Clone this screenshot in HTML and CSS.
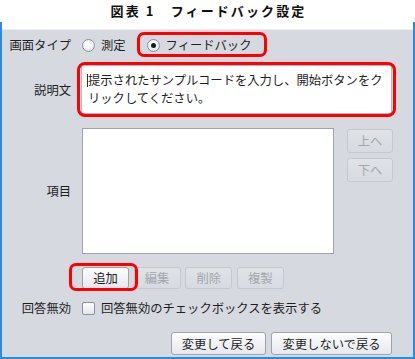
FILE: index.html
```html
<!DOCTYPE html>
<html lang="ja">
<head>
<meta charset="utf-8">
<title>フィードバック設定</title>
<link rel="stylesheet" href="styles.css">
</head>
<body>
<div class="caption">図表 1　フィードバック設定</div>
<div class="window">
  <div class="strip"></div>
  <div class="panel">
    <div class="row row-type">
      <div class="label">画面タイプ</div>
      <div class="control radios">
        <label class="opt"><span class="radio"></span><span>測定</span></label>
        <label class="opt opt-fb mark"><span class="radio checked"></span><span>フィードバック</span></label>
      </div>
    </div>
    <div class="row row-desc">
      <div class="label">説明文</div>
      <div class="control">
        <div class="textarea mark mark-text"><span class="caret"></span>提示されたサンプルコードを入力し、開始ボタンをク<br>リックしてください。</div>
      </div>
    </div>
    <div class="row row-items">
      <div class="label">項目</div>
      <div class="control items">
        <div class="list"></div>
        <div class="side">
          <button class="btn small" disabled>上へ</button>
          <button class="btn small" disabled>下へ</button>
        </div>
      </div>
    </div>
    <div class="row row-actions">
      <div class="label"></div>
      <div class="control actions">
        <button class="btn small mark mark-add">追加</button>
        <button class="btn small" disabled>編集</button>
        <button class="btn small" disabled>削除</button>
        <button class="btn small" disabled>複製</button>
      </div>
    </div>
    <div class="row row-check">
      <div class="label">回答無効</div>
      <div class="control">
        <label class="opt"><span class="checkbox"></span><span>回答無効のチェックボックスを表示する</span></label>
      </div>
    </div>
    <div class="footer">
      <button class="btn wide">変更して戻る</button>
      <button class="btn wide">変更しないで戻る</button>
    </div>
  </div>
</div>
</body>
</html>
```
FILE: styles.css
```css
* { box-sizing: border-box; }
html, body { margin: 0; padding: 0; background: #ffffff; }
body {
  width: 415px;
  height: 359px;
  overflow: hidden;
  font-family: "Noto Sans CJK JP", "Noto Sans", sans-serif;
  font-size: 12.3px;
  color: #1e1e1e;
}
.caption {
  height: 22px;
  line-height: 22px;
  text-align: center;
  font-weight: 700;
  font-size: 13px;
  letter-spacing: 2.1px;
  padding-left: 2px;
  color: #111;
}
.window {
  border: 2px solid #2a8be0;
  border-top: none;
  height: 337px;
  display: flex;
  flex-direction: column;
}
.strip { height: 7px; background: #ffffff; }
.panel {
  flex: 1;
  background: #d6d9e0;
  border-top: 1px solid #eceef2;
  padding: 3px 20px 2px 0;
  display: flex;
  flex-direction: column;
}
.row {
  display: grid;
  grid-template-columns: 69px 1fr;
  column-gap: 11px;
  align-items: center;
}
.label { text-align: right; white-space: nowrap; }
.control { display: flex; align-items: center; }
.row-type { height: 24px; }
.row-desc { margin-top: 8px; }
.row-items { margin-top: 14px; }
.row-actions { margin-top: 13px; }
.row-check { margin-top: 10px; height: 16px; }

.opt { display: inline-flex; align-items: center; gap: 6px; white-space: nowrap; }
.opt-fb { margin-left: 21px; height: 24px; }

.radio {
  width: 13px; height: 13px;
  border-radius: 50%;
  border: 1px solid #8d929b;
  background: radial-gradient(circle at 45% 40%, #ffffff 0%, #eef0f3 55%, #c9ccd3 100%);
  display: inline-flex; align-items: center; justify-content: center;
}
.radio.checked::before {
  content: "";
  width: 5px; height: 5px;
  border-radius: 50%;
  background: #1a1a1a;
}
.checkbox {
  width: 13px; height: 13px;
  border-radius: 2px;
  border: 1px solid #8d929b;
  background: linear-gradient(#ffffff, #e3e5ea);
}

.textarea {
  width: 100%;
  height: 49px;
  margin-left: -1px;
  background: #ffffff;
  border: 1px solid #a9bcd6;
  border-radius: 2px;
  padding: 5px 6px;
  line-height: 18px;
  white-space: nowrap;
  position: relative;
}
.caret {
  display: inline-block;
  width: 1px; height: 13px;
  background: #333;
  vertical-align: -2px;
  margin-left: -1px;
}

.items { align-items: flex-start; gap: 13px; }
.list {
  flex: 1;
  height: 126px;
  background: #ffffff;
  border: 1px solid #9fa3ab;
}
.side { display: flex; flex-direction: column; gap: 5px; margin-top: 1px; }

.btn {
  font: inherit;
  color: #1e1e1e;
  background: linear-gradient(#fdfdfe, #e6e8ec);
  border: 1px solid #9ea3ab;
  border-radius: 3px;
  padding: 0 10px;
  white-space: nowrap;
  cursor: default;
}
.btn.small { width: 47px; height: 22px; padding: 0; }
.side .btn.small { width: 46px; height: 24px; }
.btn:disabled {
  color: #a4a7ad;
  background: linear-gradient(#dfe2e7, #d7dae0);
  border-color: #c5c8ce;
}
.actions { gap: 4.6px; }
.actions .btn { height: 22px; }

.footer {
  margin-top: 17px;
  display: flex;
  justify-content: flex-end;
  gap: 5px;
  padding-right: 1px;
}
.btn.wide { height: 23px; }
.btn.wide:first-child { width: 95px; padding: 0; }
.btn.wide:last-child { width: 121px; padding: 0; }

/* red annotation frames, drawn over the controls */
.mark { position: relative; }
.mark::after {
  content: "";
  position: absolute;
  border: 3px solid #ff0000;
  border-radius: 7px;
  pointer-events: none;
  z-index: 2;
}
.opt-fb::after { left: -10px; right: -16px; top: -1px; bottom: 0; }
.mark-text::after { left: -5px; right: -5px; top: -4px; bottom: -4px; border-radius: 8px; }
.mark-add::after { left: -14px; right: -10px; top: -5px; bottom: -3px; }
```
